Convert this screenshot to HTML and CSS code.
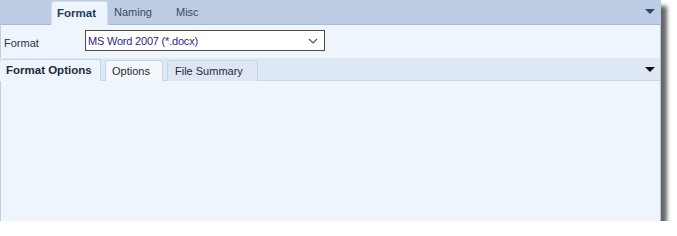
FILE: index.html
```html
<!DOCTYPE html>
<html>
<head>
<meta charset="utf-8">
<link rel="stylesheet" href="styles.css">
</head>
<body>
<div class="panel">
  <div class="topbar">
    <div class="toptabs">
      <div class="ttab active">Format</div>
      <div class="ttab">Naming</div>
      <div class="ttab">Misc</div>
    </div>
    <div class="arrow navy"></div>
  </div>
  <div class="formatrow">
    <div class="label">Format</div>
    <div class="select">
      <span class="seltext">MS Word 2007 (*.docx)</span>
      <svg class="chev" width="10" height="6" viewBox="0 0 10 6"><path d="M1 1 L5 5 L9 1" fill="none" stroke="#555" stroke-width="1.2"/></svg>
    </div>
  </div>
  <div class="subbar">
    <div class="subtabs">
      <div class="stab active">Format Options</div>
      <div class="stab">Options</div>
      <div class="stab dim">File Summary</div>
    </div>
    <div class="arrow black"></div>
  </div>
  <div class="content"></div>
</div>
</body>
</html>
```
FILE: styles.css
```css
html, body { margin: 0; padding: 0; background: #ffffff; }
body { font-family: "Liberation Sans", Arial, sans-serif; font-size: 11px; color: #1e2a3a; white-space: nowrap; }
.panel {
  width: 660px;
  height: 221px;
  display: flex;
  flex-direction: column;
  background: #eef5fd;
  border-right: 1px solid #b9c6d8;
  box-shadow: 6px 6px 4px rgba(0,0,0,0.6);
}
.topbar {
  height: 24px;
  background: #bccde4;
  border-bottom: 1px solid #a7bad4;
  display: flex;
  align-items: flex-end;
  justify-content: space-between;
  flex-shrink: 0;
}
.toptabs { display: flex; align-items: flex-end; padding-left: 51px; margin-bottom: -1px; }
.ttab {
  height: 24px;
  line-height: 23px;
  padding: 0 0 0 6px;
  color: #3c4a5e;
  box-sizing: border-box;
}
.ttab.active {
  background: #eef5fd;
  border: 1px solid #d0dcec;
  border-bottom: none;
  border-radius: 3px 3px 0 0;
  font-weight: bold;
  font-size: 11.5px;
  color: #1f3a5c;
  padding: 0 0 0 5px;
  width: 57px;
}
.ttab:nth-child(2) { padding-left: 6px; width: 62px; }
.arrow {
  width: 0; height: 0;
  border-left: 5px solid transparent;
  border-right: 5px solid transparent;
  margin-right: 5px;
}
.arrow.navy { border-top: 5px solid #2b4870; margin-bottom: 10px; }
.arrow.black { border-top: 5px solid #111; margin-bottom: 8px; }
.formatrow {
  height: 33px;
  display: flex;
  align-items: center;
  border-left: 1px solid #c3cfde;
  flex-shrink: 0;
}
.label { width: 81px; padding-left: 3px; color: #2a3547; margin-top: 2px; }
.select {
  height: 21px;
  border: 1px solid #4a4a4a;
  background: #ffffff;
  display: flex;
  align-items: center;
  justify-content: space-between;
  padding: 0 6px 0 2px;
  box-sizing: border-box;
  width: 240px;
  margin-top: -2px;
}
.seltext { color: #2b1f8a; letter-spacing: -0.2px; }
.chev { display: block; }
.subbar {
  height: 22px;
  background: #dfe9f6;
  display: flex;
  align-items: flex-end;
  justify-content: space-between;
  border-bottom: 1px solid #c9d6e7;
  flex-shrink: 0;
}
.subtabs { display: flex; align-items: flex-end; margin-bottom: -1px; }
.stab {
  height: 21px;
  line-height: 20px;
  box-sizing: border-box;
  padding: 0 6px;
  background: #f4f8fd;
  border: 1px solid #c9d6e7;
  border-bottom: none;
  border-radius: 3px 3px 0 0;
  margin-right: 4px;
  color: #1e2a3a;
}
.stab.active { font-weight: bold; font-size: 11.5px; width: 101px; height: 22px; border-left: none; padding-left: 6px; border-bottom: 1px solid #eef5fd; background: #eef5fd; }
.stab:nth-child(2) { width: 58px; padding-left: 6px; }
.stab.dim { width: 91px; background: #dde6f2; padding-left: 7px; }
.content { flex: 1; border-left: 1px solid #c3cfde; }
```
